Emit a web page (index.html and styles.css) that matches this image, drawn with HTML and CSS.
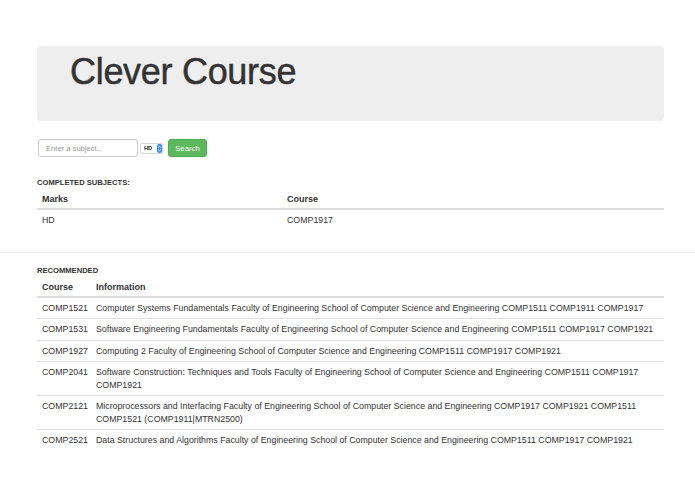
FILE: index.html
```html
<!DOCTYPE html>
<html lang="en">
<head>
<meta charset="utf-8">
<title>Clever Course</title>
<link rel="stylesheet" href="styles.css">
</head>
<body>
<div class="container">
  <div class="jumbotron">
    <h1>Clever Course</h1>
  </div>
  <form class="search-form">
    <input class="subject-input" type="text" placeholder="Enter a subject...">
    <span class="mark-select">
      <span class="mark-value">HD</span>
      <span class="mark-stepper">
        <svg width="5" height="7" viewBox="0 0 5 7"><path d="M1 2.6 L2.5 1.2 L4 2.6 M1 4.4 L2.5 5.8 L4 4.4" fill="none" stroke="#fff" stroke-width="0.8"/></svg>
      </span>
    </span>
    <button class="btn-search" type="button">Search</button>
  </form>

  <h5 class="section-label">Completed subjects:</h5>
  <table class="table completed">
    <thead>
      <tr><th class="marks-col">Marks</th><th>Course</th></tr>
    </thead>
    <tbody>
      <tr><td>HD</td><td>COMP1917</td></tr>
    </tbody>
  </table>
</div>
<hr class="divider">
<div class="container">
  <h5 class="section-label rec-label">Recommended</h5>
  <table class="table recommended">
    <thead>
      <tr><th class="course-col">Course</th><th>Information</th></tr>
    </thead>
    <tbody>
      <tr><td>COMP1521</td><td>Computer Systems Fundamentals Faculty of Engineering School of Computer Science and Engineering COMP1511 COMP1911 COMP1917</td></tr>
      <tr><td>COMP1531</td><td>Software Engineering Fundamentals Faculty of Engineering School of Computer Science and Engineering COMP1511 COMP1917 COMP1921</td></tr>
      <tr><td>COMP1927</td><td>Computing 2 Faculty of Engineering School of Computer Science and Engineering COMP1511 COMP1917 COMP1921</td></tr>
      <tr><td>COMP2041</td><td>Software Construction: Techniques and Tools Faculty of Engineering School of Computer Science and Engineering COMP1511 COMP1917 COMP1921</td></tr>
      <tr><td>COMP2121</td><td>Microprocessors and Interfacing Faculty of Engineering School of Computer Science and Engineering COMP1917 COMP1921 COMP1511 COMP1521 (COMP1911|MTRN2500)</td></tr>
      <tr><td>COMP2521</td><td>Data Structures and Algorithms Faculty of Engineering School of Computer Science and Engineering COMP1511 COMP1917 COMP1921</td></tr>
    </tbody>
  </table>
</div>
</body>
</html>
```

FILE: styles.css
```css
html, body {
  margin: 0;
  padding: 0;
  background: #fff;
}
body {
  font-family: "Liberation Sans", Arial, Helvetica, sans-serif;
  color: #333;
  font-size: 8.8px;
  line-height: 12.5px;
}
.container {
  width: 627px;
  margin-left: 37px;
}
.jumbotron {
  margin-top: 46px;
  height: 75px;
  box-sizing: border-box;
  padding: 6px 33px 0;
  background: #eeeeee;
  border-radius: 4px;
}
.jumbotron h1 {
  margin: 0;
  font-size: 36px;
  line-height: 40px;
  font-weight: 500;
  color: #333;
  letter-spacing: -0.3px;
  -webkit-text-stroke: 0.5px #333;
}
.search-form {
  margin-top: 18px;
  display: flex;
  align-items: center;
  height: 18px;
}
.subject-input {
  box-sizing: border-box;
  width: 100px;
  height: 18px;
  margin: 0 0 0 1px;
  padding: 0 7px;
  border: 1px solid #ccc;
  border-radius: 3px;
  font-family: inherit;
  font-size: 7.6px;
  color: #555;
  box-shadow: inset 0 1px 1px rgba(0,0,0,0.06);
  outline: none;
}
.subject-input::placeholder {
  color: #999;
}
.mark-select {
  display: flex;
  align-items: stretch;
  height: 9px;
  margin-left: 2px;
  border: 1px solid #d6d6d6;
  border-radius: 2px;
  background: #fff;
}
.mark-value {
  width: 13px;
  padding-left: 3px;
  font-size: 5.6px;
  font-weight: bold;
  line-height: 9px;
  color: #222;
}
.mark-stepper {
  width: 5px;
  background: #3d8ef0;
  border-radius: 2px;
  display: flex;
  align-items: center;
  justify-content: center;
}
.btn-search {
  margin-left: 5px;
  box-sizing: border-box;
  width: 39px;
  height: 18px;
  padding: 0;
  border: 1px solid #4cae4c;
  border-radius: 3px;
  background: #5cb85c;
  color: #fff;
  font-family: inherit;
  font-size: 7.8px;
  cursor: pointer;
}
.section-label {
  margin: 21px 0 0;
  font-size: 7.6px;
  line-height: 10px;
  font-weight: bold;
  text-transform: uppercase;
  color: #333;
}
.table {
  width: 100%;
  border-collapse: collapse;
  border-spacing: 0;
  margin-top: 1px;
}
.table th,
.table td {
  padding: 4px 5px;
  text-align: left;
  vertical-align: top;
}
.table th {
  padding-bottom: 2px;
  font-weight: bold;
  font-size: 9px;
  border-bottom: 2px solid #ddd;
}
.table tbody tr + tr td {
  border-top: 1px solid #ddd;
}
.marks-col {
  width: 235px;
}
.course-col {
  width: 44px;
}
.recommended th:first-child,
.recommended td:first-child {
  white-space: nowrap;
  padding-right: 3px;
}
.divider {
  margin: 22px 0 0;
  border: 0;
  border-top: 1px solid #f0f0f0;
  height: 0;
}
.rec-label {
  margin-top: 13px;
}
```
